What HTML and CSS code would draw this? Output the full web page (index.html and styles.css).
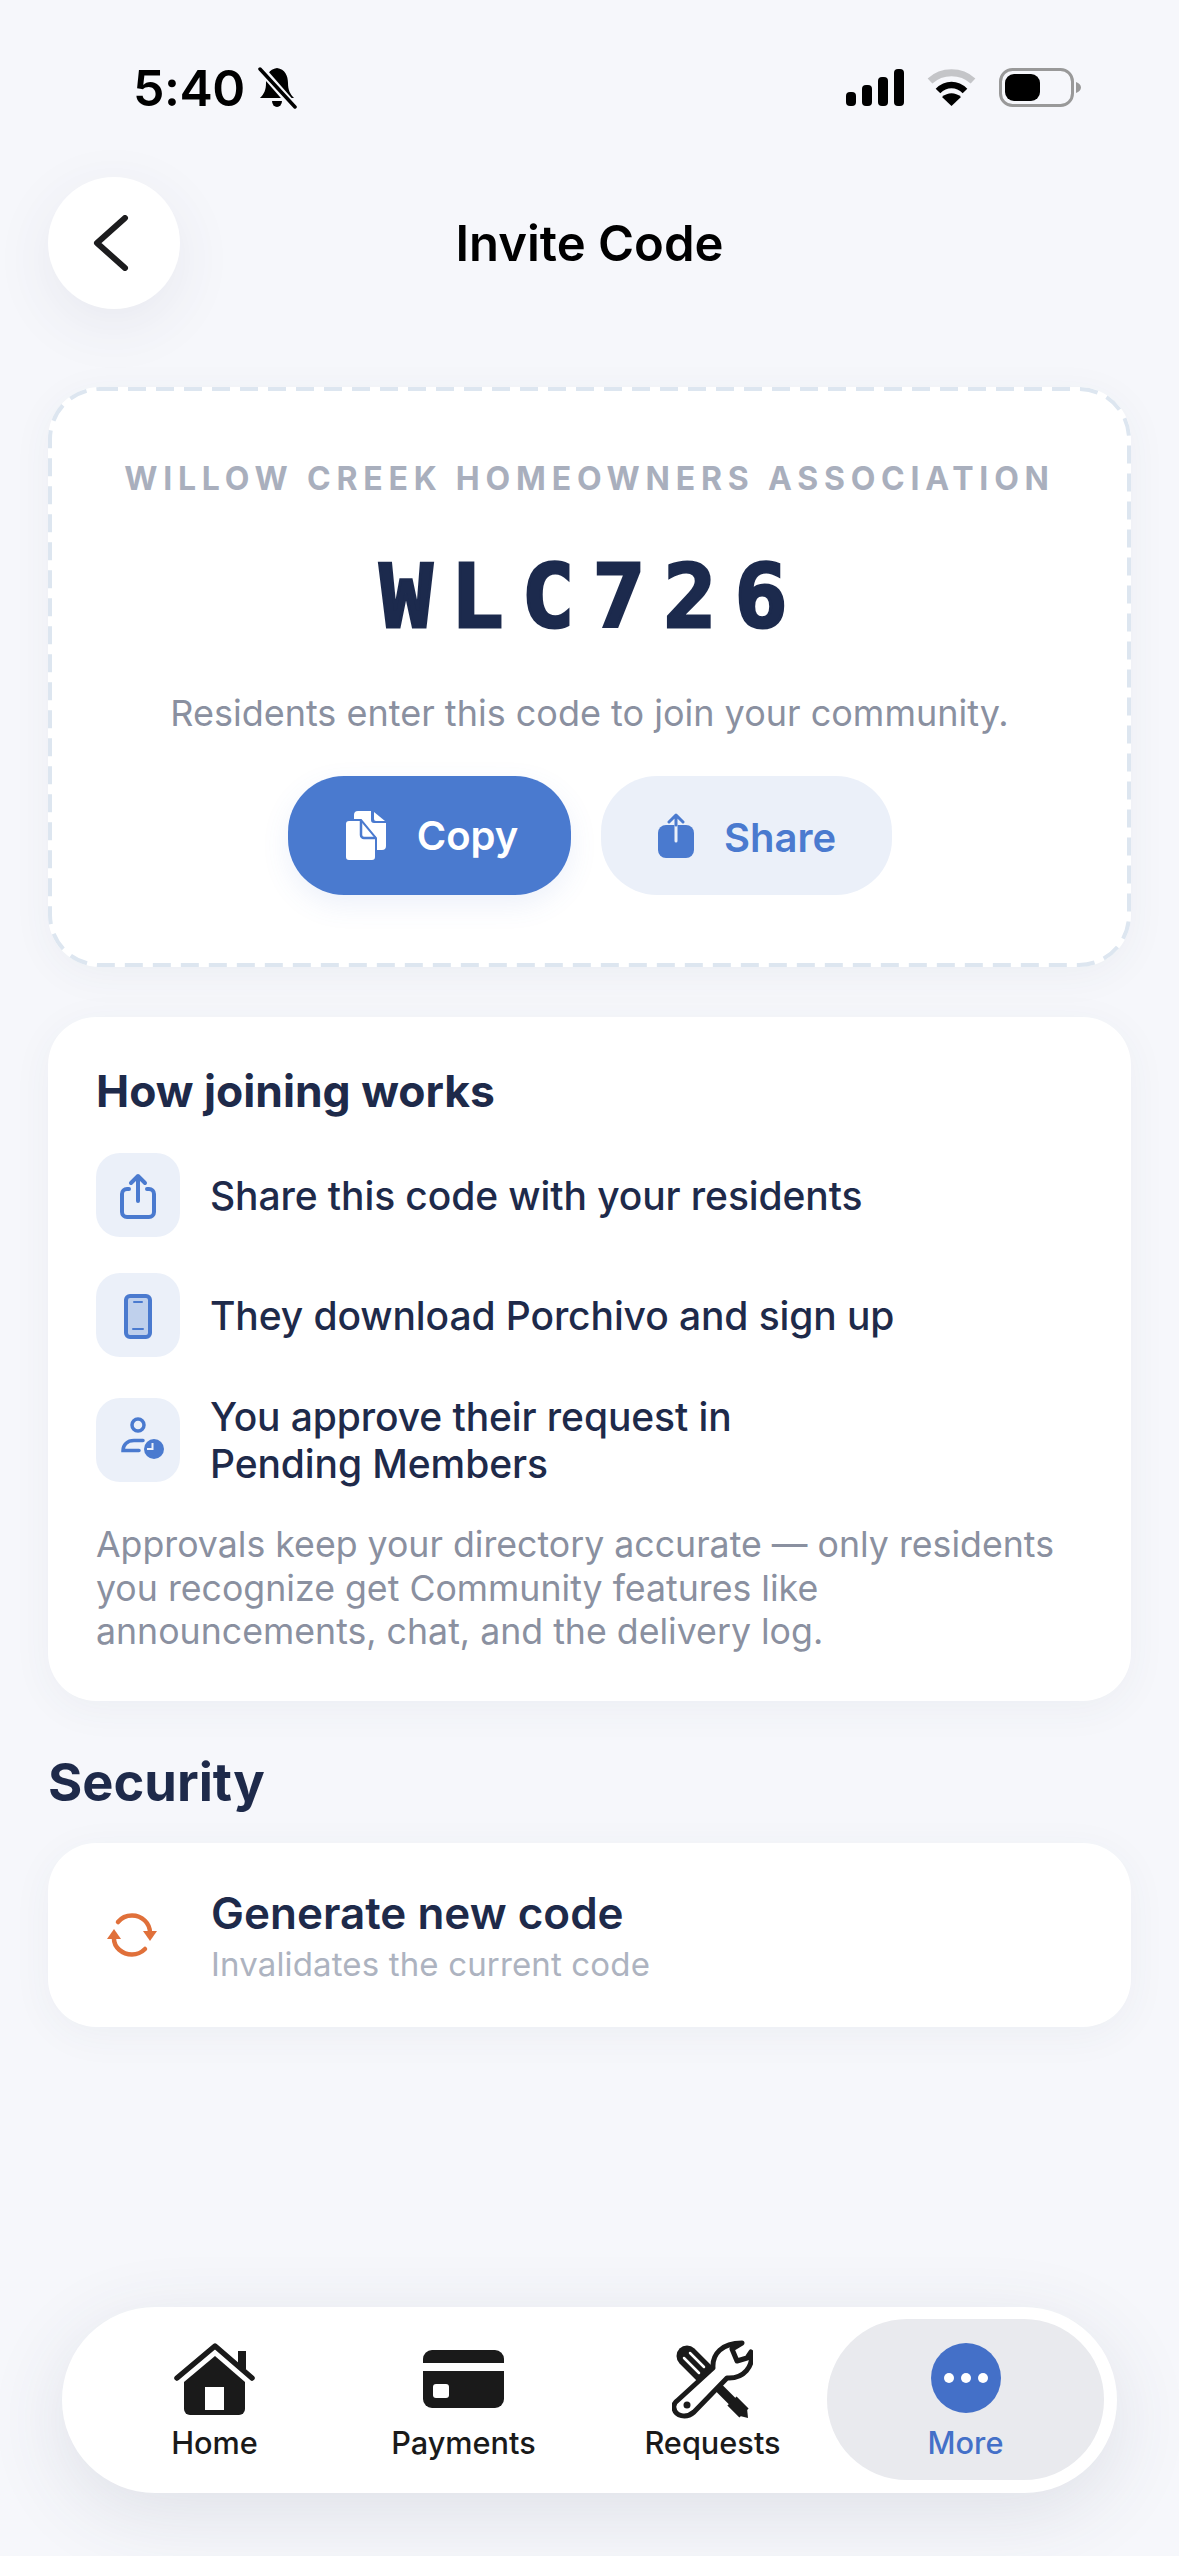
FILE: index.html
```html
<!doctype html>
<html lang="en">
<head>
    <meta charset="UTF-8">
    <meta name="viewport" content="width=device-width, initial-scale=1.0">
    <title>Invite Code</title>
    <link rel="stylesheet" href="styles.css">
</head>
<body>
<div class="screen">

    <div class="status">
        <div class="status-left">
            <span class="time">5:40</span>
            <svg class="bell" width="40" height="42" viewBox="0 0 40 42">
                <path d="M20 1C12 2 9 9 9 16C9 23 7 27 3 31H37C33 27 31 23 31 16C31 9 28 2 20 1Z" fill="#000"/>
                <path d="M15 34a5 6 0 0 0 10 0z" fill="#000"/>
                <path d="M3 1L38 41" stroke="#f6f7fb" stroke-width="8"/>
                <path d="M3 2L38 40" stroke="#000" stroke-width="3.5" stroke-linecap="round"/>
            </svg>
        </div>
        <div class="status-right">
            <svg width="58" height="37" viewBox="0 0 58 37">
                <rect x="0" y="23" width="10" height="14" rx="4"/>
                <rect x="16" y="16" width="10" height="21" rx="4"/>
                <rect x="32" y="8" width="10" height="29" rx="4"/>
                <rect x="48" y="0" width="10" height="37" rx="4"/>
            </svg>
            <svg width="49" height="37" viewBox="0 0 49 37">
                <path d="M3 12C15 1 34 1 46 12" fill="none" stroke="#c4c5c8" stroke-width="7"/>
                <path d="M11 22C19 14 30 14 38 22" fill="none" stroke="#000" stroke-width="6.5"/>
                <path d="M24.5 37L15 28C21 23 28 23 34 28Z" fill="#000"/>
            </svg>
            <svg width="82" height="39" viewBox="0 0 82 39">
                <rect x="1.5" y="1.5" width="72" height="36" rx="12" fill="none" stroke="#999" stroke-width="3"/>
                <rect x="6" y="6" width="35" height="27" rx="9"/>
                <path d="M77 14C80 15 82 17 82 19.5C82 22 80 24 77 25Z" fill="#999"/>
            </svg>
        </div>
    </div>

    <div class="header">
        <div class="back">
            <svg width="36" height="56" viewBox="0 0 36 56">
                <path d="M32 3L4 28L32 53" fill="none" stroke="#1c1c1e" stroke-width="6" stroke-linecap="round" stroke-linejoin="round"/>
            </svg>
        </div>
        <div class="title">Invite Code</div>
    </div>

    <div class="code-card">
        <svg class="dashes" width="1083" height="580" viewBox="0 0 1083 580">
            <rect x="2" y="2" width="1079" height="576" rx="50" fill="none" stroke="#dde6f0" stroke-width="4" stroke-dasharray="18 10"/>
        </svg>
        <div class="org">WILLOW CREEK HOMEOWNERS ASSOCIATION</div>
        <div class="code">WLC726</div>
        <div class="hint">Residents enter this code to join your community.</div>
        <div class="buttons">
            <div class="btn btn-copy">
                <svg width="41" height="50" viewBox="0 0 41 50">
                    <path d="M13 0H26V9a3 3 0 0 0 3 3H41V35a4 4 0 0 1-4 4H13a4 4 0 0 1-4-4V4a4 4 0 0 1 4-4Z" fill="#fff"/>
                    <path d="M29 1L40 10H31a2 2 0 0 1-2-2Z" fill="#fff"/>
                    <path d="M4 9H16L31 27V46a4 4 0 0 1-4 4H4a4 4 0 0 1-4-4V13a4 4 0 0 1 4-4Z" fill="#fff" stroke="#4a7acf" stroke-width="2"/>
                    <path d="M16 10V24a3 3 0 0 0 3 3H31" fill="none" stroke="#4a7acf" stroke-width="2.5"/>
                </svg>
                <span>Copy</span>
            </div>
            <div class="btn btn-share">
                <svg width="36" height="45" viewBox="0 0 36 45">
                    <rect x="0" y="12" width="36" height="33" rx="8" fill="#4a7acf"/>
                    <path d="M18 12V28" stroke="#ebf0f9" stroke-width="3" stroke-linecap="round"/>
                    <path d="M18 12V3M11 9L18 2L25 9" fill="none" stroke="#4a7acf" stroke-width="3" stroke-linecap="round" stroke-linejoin="round"/>
                </svg>
                <span>Share</span>
            </div>
        </div>
    </div>

    <div class="card steps-card">
        <h2 class="steps-title">How joining works</h2>
        <div class="step">
            <div class="tile">
                <svg width="84" height="84" viewBox="0 0 84 84">
                    <path d="M33 36H31a5 5 0 0 0-5 5V59a5 5 0 0 0 5 5H53a5 5 0 0 0 5-5V41a5 5 0 0 0-5-5H51" fill="none" stroke="#4a7acf" stroke-width="4" stroke-linecap="round"/>
                    <path d="M42 23V48M35 30L42 23L49 30" fill="none" stroke="#4a7acf" stroke-width="4" stroke-linecap="round" stroke-linejoin="round"/>
                </svg>
            </div>
            <div class="step-text">Share this code with your residents</div>
        </div>
        <div class="step">
            <div class="tile">
                <svg width="84" height="84" viewBox="0 0 84 84">
                    <rect x="30" y="23" width="24" height="41" rx="4" fill="#bfd0ec" stroke="#4a7acf" stroke-width="4"/>
                    <path d="M38 29H46M37 56H47" stroke="#4a7acf" stroke-width="2" stroke-linecap="round"/>
                </svg>
            </div>
            <div class="step-text">They download Porchivo and sign up</div>
        </div>
        <div class="step">
            <div class="tile">
                <svg width="84" height="84" viewBox="0 0 84 84">
                    <circle cx="42" cy="27" r="6" fill="none" stroke="#4a7acf" stroke-width="3.5"/>
                    <path d="M47 42.5H38C31 42.5 27 47 27 52.5H43" fill="none" stroke="#4a7acf" stroke-width="3.5" stroke-linecap="round"/>
                    <circle cx="58" cy="51" r="10" fill="#4a7acf"/>
                    <path d="M56.5 45V51H51" fill="none" stroke="#ebf0f9" stroke-width="2"/>
                </svg>
            </div>
            <div class="step-text">You approve their request in<br>Pending Members</div>
        </div>
        <p class="note">Approvals keep your directory accurate — only residents you recognize get Community features like announcements, chat, and the delivery log.</p>
    </div>

    <h2 class="section-title">Security</h2>

    <div class="card regen-card">
        <svg class="regen-icon" width="50" height="44" viewBox="0 0 50 44">
            <path d="M11 9C15 4 21 2.5 25 2.5C35 2.5 43 10 43 20" fill="none" stroke="#e0703a" stroke-width="4.5" stroke-linecap="round"/>
            <path d="M36 18H50L43 28Z" fill="#e0703a"/>
            <path d="M38 36C34 40 29 41.5 25 41.5C15 41.5 7 34 7 26" fill="none" stroke="#e0703a" stroke-width="4.5" stroke-linecap="round"/>
            <path d="M0 26H14L7 16Z" fill="#e0703a"/>
        </svg>
        <div>
            <div class="regen-title">Generate new code</div>
            <div class="regen-sub">Invalidates the current code</div>
        </div>
    </div>

    <div class="tabbar">
        <div class="tab">
            <svg width="81" height="72" viewBox="0 0 81 72">
                <path d="M41 13L71 39V66a6 6 0 0 1-6 6H16a6 6 0 0 1-6-6V39Z" fill="#1a1a1a"/>
                <rect x="31" y="44" width="19" height="23" fill="#fff"/>
                <path d="M3 35L41 3L78 35" fill="none" stroke="#1a1a1a" stroke-width="5.5" stroke-linecap="round" stroke-linejoin="round"/>
                <rect x="64" y="8" width="8" height="18" fill="#1a1a1a"/>
            </svg>
            <span>Home</span>
        </div>
        <div class="tab">
            <svg class="icon-card" width="81" height="58" viewBox="0 0 81 58">
                <path d="M0 13V9a9 9 0 0 1 9-9H72a9 9 0 0 1 9 9V13Z" fill="#1a1a1a"/>
                <path d="M0 21H81V49a9 9 0 0 1-9 9H9a9 9 0 0 1-9-9Z" fill="#1a1a1a"/>
                <rect x="10" y="34" width="16" height="14" rx="3" fill="#fff"/>
            </svg>
            <span>Payments</span>
        </div>
        <div class="tab">
            <svg class="icon-tools" width="81" height="79" viewBox="0 0 81 79">
                <path d="M15 16L38 39" stroke="#1a1a1a" stroke-width="21" stroke-linecap="round"/>
                <path d="M38 39L61 62" stroke="#1a1a1a" stroke-width="9"/>
                <path d="M60 61L72 73" stroke="#1a1a1a" stroke-width="13"/>
                <path d="M68 76L76 78L75 68Z" fill="#1a1a1a"/>
                <path d="M12 18L27 33M18 13L32 27" stroke="#fff" stroke-width="2.5" stroke-linecap="round"/>
                <path d="M6 60L41 28C40 14 50 3 70 3L60 9L65 21L75 18L79 12C82 26 72 39 55 38L22 72C14 79 3 76 2 68C1 64 3 62 6 60Z" fill="#fff" stroke="#1a1a1a" stroke-width="5" stroke-linejoin="round"/>
                <circle cx="15" cy="65" r="3.5" fill="#1a1a1a"/>
            </svg>
            <span>Requests</span>
        </div>
        <div class="tab tab-active">
            <svg width="70" height="70" viewBox="0 0 70 70">
                <circle cx="35" cy="35" r="35" fill="#4470c8"/>
                <circle cx="18" cy="35" r="5" fill="#fff"/>
                <circle cx="35" cy="35" r="5" fill="#fff"/>
                <circle cx="52" cy="35" r="5" fill="#fff"/>
            </svg>
            <span>More</span>
        </div>
    </div>

</div>
</body>
</html>
```

FILE: styles.css
```css
* {
    box-sizing: border-box;
}

body {
    margin: 0;
    padding: 0;
    background: #f6f7fb;
    font-family: Inter, "Noto Sans", sans-serif;
    color: #1e2a4a;
}

.screen {
    display: flex;
    flex-direction: column;
    height: 2556px;
    padding: 0 48px;
    overflow: hidden;
}

/* status bar */
.status {
    display: flex;
    justify-content: space-between;
    align-items: center;
    height: 177px;
    padding: 0 50px 0 85px;
}

.status-left,
.status-right {
    display: flex;
    align-items: center;
    margin-top: -2px;
}

.status-left {
    gap: 12px;
}

.status-right {
    gap: 23px;
}

.time {
    font-size: 50px;
    line-height: 42px;
    font-weight: 600;
    letter-spacing: -0.5px;
    color: #000;
}

/* header */
.header {
    display: grid;
    grid-template-columns: 132px 1fr 132px;
    align-items: center;
}

.back {
    display: flex;
    align-items: center;
    justify-content: center;
    width: 132px;
    height: 132px;
    border-radius: 50%;
    background: #fff;
    box-shadow: 0 16px 60px rgba(60, 70, 100, 0.08);
}

.back svg {
    margin-right: 6px;
}

.title {
    text-align: center;
    font-size: 49px;
    font-weight: 600;
    color: #000;
}

/* code */
.code-card {
    position: relative;
    display: flex;
    flex-direction: column;
    align-items: center;
    height: 580px;
    margin-top: 78px;
    padding-top: 72px;
    background: #fff;
    border-radius: 52px;
    box-shadow: 0 8px 40px rgba(60, 70, 100, 0.05);
}

.dashes {
    position: absolute;
    top: 0;
    left: 0;
}

.org {
    font-size: 32px;
    line-height: 40px;
    font-weight: 700;
    letter-spacing: 5.8px;
    color: #a9afbd;
    white-space: nowrap;
}

.code {
    margin-top: 48px;
    padding-left: 6px;
    font-family: "DejaVu Sans Mono", monospace;
    font-size: 88px;
    line-height: 100px;
    font-weight: 700;
    letter-spacing: 18px;
    -webkit-text-stroke: 3px #1c2a4d;
    color: #1c2a4d;
}

.hint {
    margin-top: 44px;
    font-size: 36px;
    line-height: 44px;
    color: #8a90a0;
}

.buttons {
    display: flex;
    gap: 30px;
    margin-top: 41px;
}

.btn {
    display: flex;
    align-items: center;
    justify-content: center;
    height: 119px;
    border-radius: 56px;
    font-size: 40px;
    font-weight: 600;
}

.btn-copy {
    gap: 31px;
    width: 283px;
    padding-left: 5px;
    background: #4a7acf;
    color: #fff;
    box-shadow: 0 10px 28px rgba(74, 122, 207, 0.1);
}

.btn-share {
    gap: 30px;
    width: 291px;
    padding-left: 2px;
    background: #ebf0f9;
    color: #4a7acf;
}

.btn-share span {
    margin-top: 3px;
}

/* how it works */
.card {
    background: #fff;
    border-radius: 48px;
    box-shadow: 0 8px 40px rgba(60, 70, 100, 0.05);
}

.steps-card {
    height: 684px;
    margin-top: 50px;
    padding: 46px 48px 0;
}

.steps-title {
    margin: 0 0 34px;
    font-size: 44.4px;
    line-height: 56px;
    font-weight: 700;
}

.step {
    display: flex;
    align-items: center;
    gap: 30px;
    margin-bottom: 36px;
}

.tile {
    flex: none;
    width: 84px;
    height: 84px;
    border-radius: 24px;
    background: #ebf0f9;
}

.tile svg {
    display: block;
}

.step-text {
    font-size: 39px;
    line-height: 47px;
    font-weight: 500;
    letter-spacing: -0.1px;
}

.note {
    margin: 2px 0 0;
    font-size: 35.7px;
    line-height: 43.5px;
    color: #8a90a0;
}

/* security */
.section-title {
    margin: 50px 0 30px;
    font-size: 52.4px;
    line-height: 62px;
    font-weight: 700;
}

.regen-card {
    display: flex;
    align-items: center;
    height: 184px;
    padding-left: 59px;
    gap: 54px;
}

.regen-title {
    font-size: 44px;
    line-height: 54px;
    font-weight: 600;
}

.regen-sub {
    margin-top: 4px;
    font-size: 33px;
    line-height: 40px;
    letter-spacing: 0.15px;
    color: #adb3c0;
}

/* bottom tabs */
.tabbar {
    display: flex;
    align-items: stretch;
    height: 186px;
    margin: auto 14px 63px;
    padding: 12px 12px 13px 28px;
    border-radius: 93px;
    background: #fff;
    box-shadow: 0 20px 80px rgba(60, 65, 90, 0.12);
}

.tab {
    display: flex;
    flex-direction: column;
    align-items: center;
    width: 249px;
    padding-top: 24px;
    font-size: 30.7px;
    line-height: 40px;
    font-weight: 500;
    color: #1a1a1a;
}

.tab svg {
    display: block;
    height: 72px;
    margin-bottom: 8px;
}

.tab svg.icon-tools {
    height: 79px;
    margin: -3px 0 4px;
}

.tab svg.icon-card {
    height: 58px;
    margin: 7px 0 15px;
}

.tab-active {
    flex: none;
    width: 277px;
    margin-left: -10px;
    border-radius: 80px;
    background: #e9eaee;
    color: #4470c8;
}

.tab-active svg {
    height: 70px;
    margin-bottom: 10px;
}
```
